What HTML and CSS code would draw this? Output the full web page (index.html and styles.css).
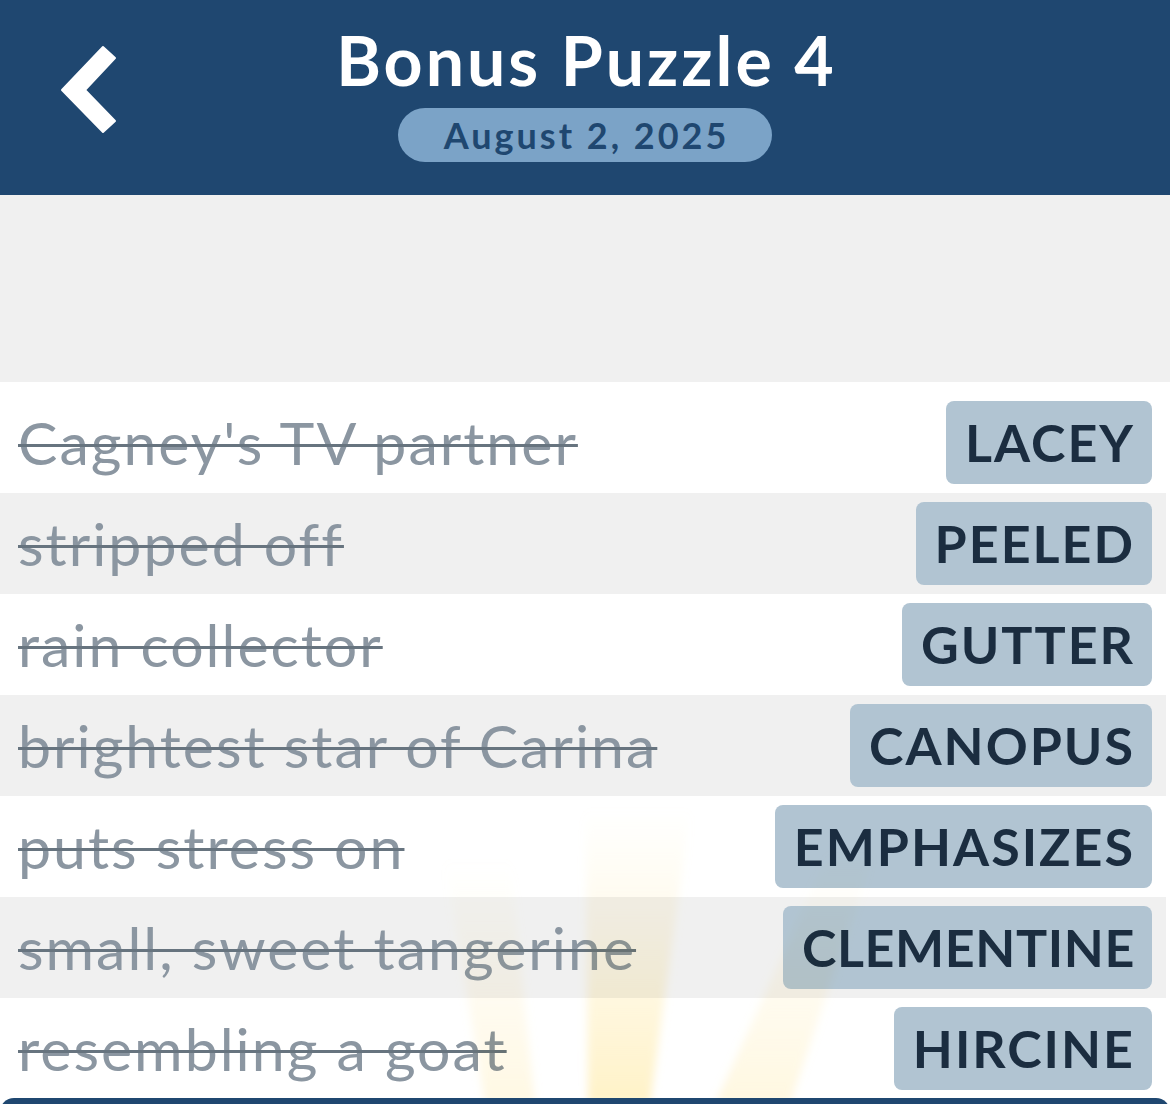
FILE: index.html
```html
<!DOCTYPE html>
<html lang="en">

<head>
  <meta charset="UTF-8">
  <meta name="viewport" content="width=device-width, initial-scale=1.0">
  <title>Bonus Puzzle 4</title>
  <link rel="stylesheet" href="styles.css">
</head>

<body>
  <!-- Top bar with back button, title and date -->
  <header class="topbar">
    <a class="back" href="#" aria-label="Back">
      <svg width="64" height="92" viewBox="56 44 64 92">
        <polygon points="62,90 103,47 115,58 85,90 115,121 103,132" fill="#fff" stroke="#fff" stroke-width="2" stroke-linejoin="round"/>
      </svg>
    </a>
    <div class="title-wrap">
      <h1 class="title">Bonus Puzzle 4</h1>
      <span class="date">August 2, 2025</span>
    </div>
  </header>

  <!-- Empty space above the answered clues -->
  <div class="spacer"></div>

  <!-- Answered clues -->
  <main class="clues">
    <div class="row">
      <span class="clue">Cagney's TV partner</span>
      <span class="answer">LACEY</span>
    </div>
    <div class="row">
      <span class="clue">stripped off</span>
      <span class="answer">PEELED</span>
    </div>
    <div class="row">
      <span class="clue">rain collector</span>
      <span class="answer">GUTTER</span>
    </div>
    <div class="row">
      <span class="clue">brightest star of Carina</span>
      <span class="answer">CANOPUS</span>
    </div>
    <div class="row">
      <span class="clue">puts stress on</span>
      <span class="answer">EMPHASIZES</span>
    </div>
    <div class="row">
      <span class="clue">small, sweet tangerine</span>
      <span class="answer tight">CLEMENTINE</span>
    </div>
    <div class="row">
      <span class="clue">resembling a goat</span>
      <span class="answer">HIRCINE</span>
    </div>
  </main>

  <!-- Faint light rays over the lower rows -->
  <div class="glow">
    <svg width="500" height="304" viewBox="0 0 500 304">
      <defs>
        <filter id="soft" x="-50%" y="-50%" width="200%" height="200%">
          <feGaussianBlur stdDeviation="4"/>
        </filter>
        <linearGradient id="fade" x1="0" y1="0" x2="0" y2="1">
          <stop offset="0" stop-color="#fff2c8" stop-opacity="0"/>
          <stop offset="0.45" stop-color="#fff2c8" stop-opacity="0.4"/>
          <stop offset="1" stop-color="#ffedb4" stop-opacity="0.75"/>
        </linearGradient>
      </defs>
      <g filter="url(#soft)">
        <polygon points="45,60 110,60 135,304 85,304" fill="url(#fade)" opacity="0.5"/>
        <polygon points="186,10 290,10 250,304 188,304" fill="url(#fade)"/>
        <polygon points="430,50 475,50 390,304 315,304" fill="url(#fade)" opacity="0.55"/>
      </g>
    </svg>
  </div>

  <!-- Bottom panel edge -->
  <div class="bottom-bar"></div>
</body>

</html>
```

FILE: styles.css
```css
/* Reset */
body,
html {
  margin: 0;
  padding: 0;
  font-family: Lato, "Open Sans", sans-serif;
}

body {
  background-color: #fff;
  width: 1170px;
  height: 1104px;
  overflow: hidden;
  position: relative;
}

/* Header */
.topbar {
  height: 195px;
  background-color: #1f4770;
  display: flex;
  align-items: flex-start;
  position: relative;
}

.back {
  position: absolute;
  left: 56px;
  top: 44px;
  display: block;
  line-height: 0;
}

.title-wrap {
  flex: 1;
  display: flex;
  flex-direction: column;
  align-items: center;
  padding-top: 20px;
}

.title {
  margin: 0;
  color: #fff;
  font-size: 68px;
  font-weight: 700;
  line-height: 80px;
  letter-spacing: 3px;
  padding-left: 3px;
}

.date {
  margin-top: 8px;
  background-color: #7ba3c7;
  color: #1f4770;
  font-size: 36px;
  font-weight: 700;
  line-height: 54px;
  letter-spacing: 3px;
  padding: 0 43px 0 46px;
  border-radius: 27px;
}

.spacer {
  height: 187px;
  background-color: #f0f0f0;
}

/* Clue list */
.clues {
  padding-top: 10px;
  padding-right: 4px;
}

.row {
  height: 101px;
  display: flex;
  align-items: center;
  justify-content: space-between;
  padding: 0 14px 0 18px;
}

.row:nth-child(even) {
  background-color: #f0f0f0;
}

.row:first-of-type {
  margin-top: -10px;
  padding-top: 10px;
}

.clue {
  color: #8b96a1;
  font-size: 59px;
  letter-spacing: 2px;
  text-decoration: line-through;
  text-decoration-color: #67747f;
  text-decoration-thickness: 3px;
}

.answer {
  background-color: #b1c4d2;
  color: #1b2d40;
  font-size: 52px;
  font-weight: 700;
  line-height: 83px;
  letter-spacing: 2px;
  padding: 0 17px 0 19px;
  border-radius: 8px;
}

.answer.tight {
  letter-spacing: 0.6px;
}

/* Light rays */
.glow {
  position: absolute;
  left: 400px;
  top: 800px;
  line-height: 0;
  pointer-events: none;
  mix-blend-mode: multiply;
}

.bottom-bar {
  position: absolute;
  left: 0;
  top: 1098px;
  width: 1170px;
  height: 20px;
  background-color: #1f4770;
  border-radius: 14px 14px 0 0;
}
```
